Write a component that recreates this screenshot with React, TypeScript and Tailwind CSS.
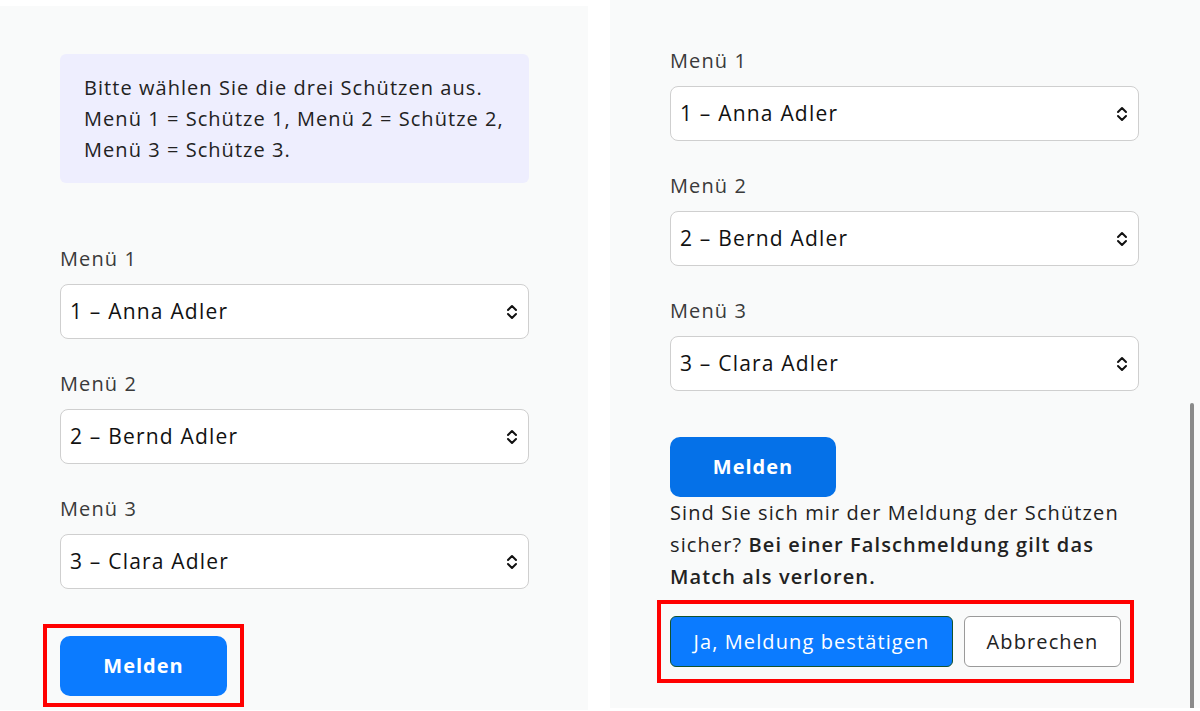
import React from 'react';

const font = { fontFamily: '"Open Sans", "Noto Sans", sans-serif' };

function Chevrons() {
  return (
    <svg width="12" height="18" viewBox="0 0 12 18" fill="none" stroke="#111" strokeWidth="2" strokeLinecap="round" strokeLinejoin="round">
      <path d="M2 7 L6 3 L10 7" />
      <path d="M2 11 L6 15 L10 11" />
    </svg>
  );
}

function SelectField({ label, value, first }: { label: string; value: string; first?: boolean }) {
  return (
    <div className={first ? '' : 'mt-[30px]'}>
      <div className="text-[20px] leading-[30px] tracking-[1.1px] text-[#3a3a3a]">{label}</div>
      <div className="mt-[10px] h-[55px] bg-white border border-[#cfcfcf] rounded-[8px] flex items-center justify-between pl-[9px] pr-[10px]">
        <span className="text-[21px] tracking-[1.2px] text-[#111]">{value}</span>
        <Chevrons />
      </div>
    </div>
  );
}

function Menus() {
  return (
    <>
      <SelectField first label="Menü 1" value="1 – Anna Adler" />
      <SelectField label="Menü 2" value="2 – Bernd Adler" />
      <SelectField label="Menü 3" value="3 – Clara Adler" />
    </>
  );
}

export default function App() {
  return (
    <div className="w-[1200px] h-[711px] bg-white flex overflow-hidden" style={font}>
      {/* Left screenshot */}
      <div className="w-[588px] h-[704px] mt-[6px] bg-[#f9fafa] pl-[60px]">
        <div className="w-[469px]">
          <div className="mt-[48px] bg-[#eeeefe] rounded-[6px] px-[24px] py-[18px] text-[20px] leading-[31px] tracking-[1.05px] whitespace-nowrap text-[#222]">
            Bitte wählen Sie die drei Schützen aus.<br />
            Menü 1 = Schütze 1, Menü 2 = Schütze 2,<br />
            Menü 3 = Schütze 3.
          </div>
          <div className="mt-[61px]">
            <Menus />
          </div>
          <div className="mt-[35px] -ml-[17px] w-[201px] h-[83px] border-[4px] border-[#ff0000] pl-[13px] pt-[8px]">
            <button className="w-[167px] h-[60px] bg-[#0b7bff] rounded-[10px] text-white text-[20px] font-bold tracking-[1px]">
              Melden
            </button>
          </div>
        </div>
      </div>

      {/* Right screenshot */}
      <div className="relative ml-[22px] flex-1 h-[708px] bg-[#f9fafa] pl-[60px]">
        <div className="w-[469px] pt-[46px]">
          <Menus />
          <button className="mt-[46px] w-[166px] h-[60px] bg-[#0571e8] rounded-[10px] text-white text-[20px] font-bold tracking-[1px]">
            Melden
          </button>
          <p className="text-[20px] leading-[32px] tracking-[1.1px] text-[#222]">
            Sind Sie sich mir der Meldung der Schützen sicher?{' '}
            <span className="font-semibold text-[#222]">Bei einer Falschmeldung gilt das Match als verloren.</span>
          </p>
          <div className="mt-[7px] -ml-[13px] w-[477px] h-[83px] border-[4px] border-[#ff0000] pl-[9px] pt-[12px] flex gap-[11px]">
            <button className="w-[283px] h-[51px] bg-[#0b7bff] border border-[#14532d] rounded-[6px] text-white text-[20px] tracking-[1.1px]">
              Ja, Meldung bestätigen
            </button>
            <button className="w-[157px] h-[51px] bg-white border border-[#9a9a9a] rounded-[6px] text-[#222] text-[20px] tracking-[1.1px]">
              Abbrechen
            </button>
          </div>
        </div>
        <div className="absolute right-[6px] top-[403px] bottom-0 w-[4px] bg-[#8a8a8a] rounded-t-[2px]" />
      </div>
    </div>
  );
}
